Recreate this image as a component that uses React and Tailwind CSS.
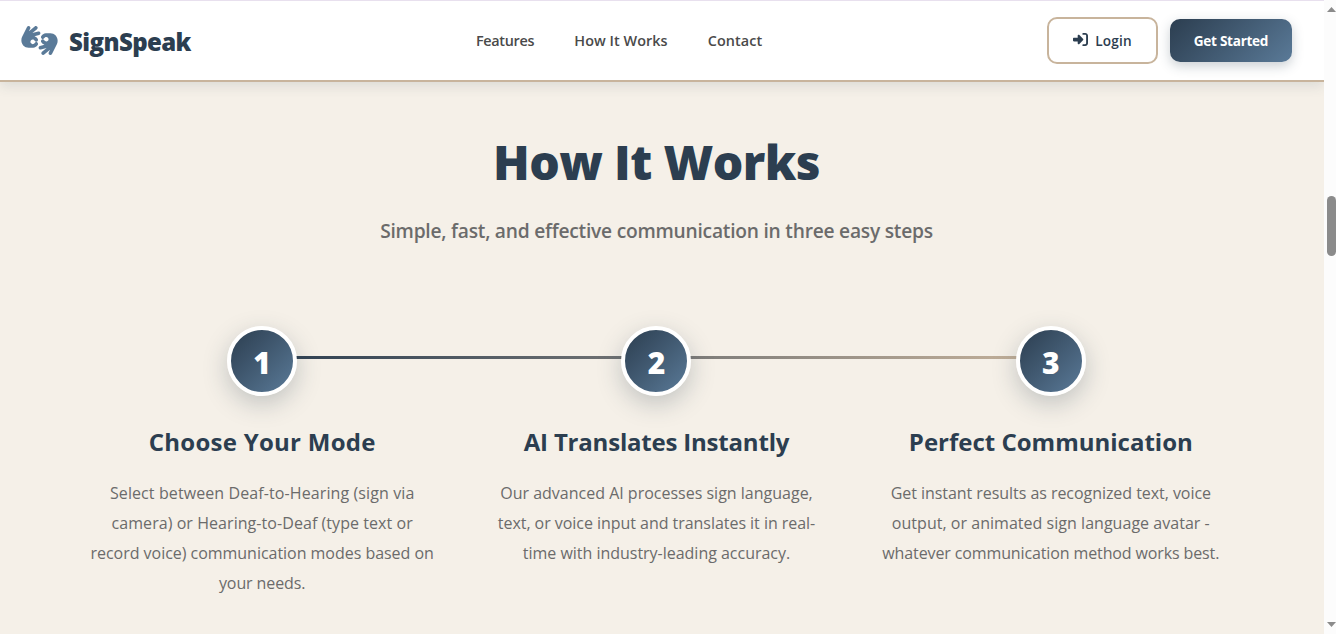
import React from "react";
import { FaHandsAslInterpreting, FaRightToBracket } from "react-icons/fa6";

const links = [
  { label: "Features", style: "w-[58px] tracking-[-0.3px]" },
  { label: "How It Works", style: "w-[94px] tracking-[0.05px]" },
  { label: "Contact", style: "w-[54px] tracking-[0.05px]" },
];

const steps = [
  {
    number: 1,
    title: "Choose Your Mode",
    titleStyle: "tracking-[0.27px]",
    lines: [
      { text: "Select between Deaf-to-Hearing (sign via", style: "tracking-[0.1px]" },
      { text: "camera) or Hearing-to-Deaf (type text or", style: "tracking-[0.06px]" },
      { text: "record voice) communication modes based on", style: "tracking-[-0.03px]" },
      { text: "your needs.", style: "tracking-[-0.1px]" },
    ],
  },
  {
    number: 2,
    title: "AI Translates Instantly",
    titleStyle: "tracking-[-0.2px]",
    lines: [
      { text: "Our advanced AI processes sign language,", style: "tracking-normal" },
      { text: "text, or voice input and translates it in real-", style: "tracking-[-0.04px]" },
      { text: "time with industry-leading accuracy.", style: "tracking-[-0.02px]" },
    ],
  },
  {
    number: 3,
    title: "Perfect Communication",
    titleStyle: "tracking-normal",
    lines: [
      { text: "Get instant results as recognized text, voice", style: "tracking-[-0.05px]" },
      { text: "output, or animated sign language avatar -", style: "tracking-[0.03px]" },
      { text: "whatever communication method works best.", style: "tracking-[-0.12px]" },
    ],
  },
];

function Navbar() {
  return (
    <header className="relative z-10 flex h-[82px] items-center justify-between border-t border-b-2 border-t-[#e8e0ee] border-b-[#c8b49c] bg-white pl-[21px] pr-8 shadow-[0_4px_12px_rgba(44,62,80,0.12)]">
      <div className="flex w-[455px] items-center gap-[11px] text-[#2c3e50]">
        <FaHandsAslInterpreting className="-mt-px h-[29px] w-[37px] text-[#5a7a98]" />
        <span className="mt-0.5 whitespace-nowrap text-2xl font-extrabold tracking-[-0.6px]">SignSpeak</span>
      </div>

      <nav className="flex flex-1 gap-10 text-[14.4px] font-semibold text-[#4a4a4a]">
        {links.map((link) => (
          <a key={link.label} href="#" className={`flex justify-center whitespace-nowrap ${link.style}`}>
            {link.label}
          </a>
        ))}
      </nav>

      <div className="flex items-center gap-3 text-[13.6px]">
        <button className="flex h-[47px] w-[111px] items-center justify-center gap-[7px] rounded-[10px] border-2 border-[#c8b49c] font-semibold text-[#2c3e50]">
          <FaRightToBracket className="-mt-0.5 size-[15px]" />
          <span className="pt-0.5 tracking-[0.15px]">Login</span>
        </button>
        <button className="h-[43px] w-[122px] whitespace-nowrap rounded-[10px] bg-linear-135 from-[#2c3e50] to-[#5a7a98] pt-0.5 font-bold tracking-[-0.3px] text-white shadow-[0_4px_12px_rgba(44,62,80,0.25)]">
          Get Started
        </button>
      </div>
    </header>
  );
}

function Step({ step }) {
  return (
    <div className="flex flex-col items-center text-center">
      <div className="relative flex size-[70px] items-center justify-center rounded-full border-4 border-white bg-linear-135 from-[#2c3e50] to-[#5a7a98] pt-0.5 text-[30px] font-extrabold text-white shadow-[0_8px_24px_rgba(44,62,80,0.25)]">
        {step.number}
      </div>
      <h3 className={`mt-[27px] whitespace-nowrap text-2xl leading-[38px] font-bold text-[#2c3e50] ${step.titleStyle}`}>
        {step.title}
      </h3>
      <p className="mt-[17px] text-base leading-[30px] text-[#6b6b6b]">
        {step.lines.map((line) => (
          <span key={line.text} className={`block whitespace-nowrap ${line.style}`}>
            {line.text}
          </span>
        ))}
      </p>
    </div>
  );
}

function HowItWorks() {
  return (
    <section className="flex-1 pr-[11px] pt-[50px] text-center">
      <h2 className="text-[48px] leading-[60px] font-extrabold tracking-[-0.6px] text-[#2c3e50]">How It Works</h2>
      <p className="mt-[24px] text-[19.2px] leading-[30px] font-semibold tracking-[-0.23px] text-[#6b6b6b]">
        Simple, fast, and effective communication in three easy steps
      </p>

      <div className="relative mx-auto mt-20 grid w-[1151px] grid-cols-3 gap-8">
        {/* connector behind the step numbers */}
        <div className="absolute left-[181px] right-[181px] top-[30px] h-[3px] bg-linear-to-r from-[#2c3e50] to-[#c8b49c]" />
        {steps.map((step) => (
          <Step key={step.number} step={step} />
        ))}
      </div>
    </section>
  );
}

function Scrollbar() {
  return (
    <aside className="flex w-3 flex-col items-end bg-[#fcfcfc] pt-[7px] pb-[7px]">
      <svg width="9" height="5" viewBox="0 0 9 5" fill="#8b8b8b">
        <path d="M4.5 0L9 5H0z" />
      </svg>
      <div className="mt-[184px] h-[60px] w-[9px] rounded-full bg-[#8b8b8b]" />
      <svg className="mt-auto" width="9" height="5" viewBox="0 0 9 5" fill="#8b8b8b">
        <path d="M0 0h9L4.5 5z" />
      </svg>
    </aside>
  );
}

export default function App() {
  return (
    <div className="flex h-[634px] w-[1336px] overflow-hidden bg-[#f5f0e8] font-['Open_Sans','Noto_Sans',sans-serif]">
      <main className="flex w-[1324px] flex-col overflow-hidden">
        <Navbar />
        <HowItWorks />
      </main>
      <Scrollbar />
    </div>
  );
}
